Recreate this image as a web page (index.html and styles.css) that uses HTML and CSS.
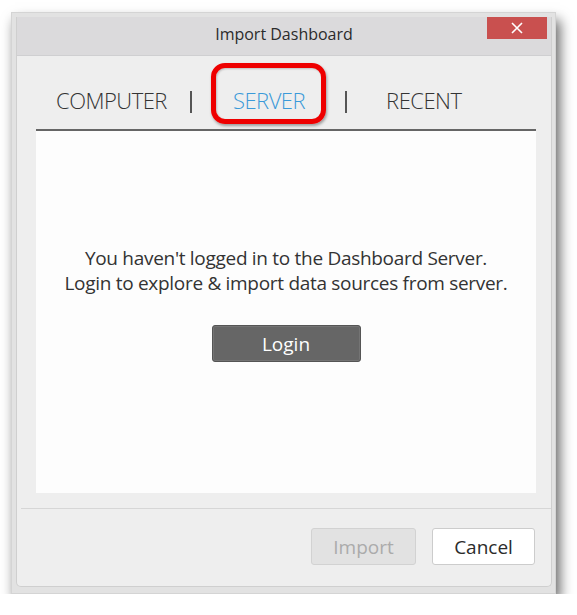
FILE: index.html
```html
<!DOCTYPE html>
<html>
<head>
<meta charset="utf-8">
<link rel="stylesheet" href="styles.css">
</head>
<body>
<div class="frame">
  <div class="dialog">
    <div class="titlebar">
      <span class="title">Import Dashboard</span>
      <button class="close" aria-label="Close">
        <svg width="12" height="12" viewBox="0 0 12 12"><path d="M1 1L11 11M11 1L1 11" stroke="#fff" stroke-width="1.6" fill="none"/></svg>
      </button>
    </div>
    <div class="body">
      <div class="tabs">
        <span class="tab">COMPUTER</span>
        <span class="sep sep1" aria-hidden="true"></span>
        <span class="tab active">SERVER</span>
        <span class="sep sep2" aria-hidden="true"></span>
        <span class="tab">RECENT</span>
      </div>
      <div class="panel">
        <p class="msg">You haven't logged in to the Dashboard Server.<br>Login to explore &amp; import data sources from server.</p>
        <button class="login">Login</button>
      </div>
    </div>
    <div class="footer">
      <button class="btn disabled">Import</button>
      <button class="btn cancel">Cancel</button>
    </div>
  </div>
</div>
</body>
</html>
```
FILE: styles.css
```css
html, body {
  margin: 0;
  padding: 0;
  background: #ffffff;
  font-family: "Open Sans", "Noto Sans", sans-serif;
}
body {
  padding: 12px 0 0 11px;
}
.frame {
  width: 545px;
  height: 582px;
  box-sizing: border-box;
  padding: 5px 4px 7px 5px;
  background: #e2e2e2;
  border: 1px solid #d4d4d4;
  box-shadow: 4px 8px 12px rgba(0,0,0,0.6);
}
.dialog {
  width: 536px;
  height: 570px;
  margin: -1px 0 0 -1px;
  background: #eeeeee;
  border-radius: 0 0 5px 5px;
  border: 1px solid #cfcfcf;
  border-top: none;
  box-sizing: border-box;
  display: flex;
  flex-direction: column;
  position: relative;
}
.titlebar {
  height: 39px;
  background: #dbdadc;
  border-bottom: 1px solid #cfcfd1;
  display: flex;
  align-items: center;
  justify-content: center;
  flex: none;
  box-sizing: border-box;
  padding-bottom: 5px;
}
.title {
  font-size: 16px;
  color: #2b2b2b;
}
.close {
  position: absolute;
  top: 0;
  right: 4px;
  width: 60px;
  height: 22px;
  border: none;
  background: #c9504f;
  padding: 0;
  display: flex;
  align-items: center;
  justify-content: center;
}
.body {
  padding: 0 15px 0 19px;
  flex: none;
}
.tabs {
  display: flex;
  align-items: center;
  border-bottom: 2px solid #666666;
  box-sizing: border-box;
  padding: 15px 0 0 20px;
  height: 75px;
}
.tab {
  font-size: 22px;
  font-weight: 300;
  color: #333333;
  letter-spacing: -0.5px;
}
.tab.active {
  color: #3a9ad9;
  position: relative;
}
.tab.active::after {
  content: "";
  position: absolute;
  left: -22px;
  right: -21px;
  top: -22px;
  bottom: -9px;
  border: 5px solid #ee0000;
  border-radius: 14px;
  box-shadow: 1px 2px 3px rgba(0,0,0,0.35), inset 1px 1px 2px rgba(0,0,0,0.2);
}
.sep {
  width: 2px;
  height: 22px;
  background: #555555;
  margin-top: 4px;
  flex: none;
}
.sep1 {
  margin-left: 23px;
  margin-right: 41px;
}
.sep2 {
  margin-left: 40px;
  margin-right: 39px;
}
.panel {
  height: 362px;
  background: #fdfdfd;
  display: flex;
  flex-direction: column;
  align-items: center;
  box-sizing: border-box;
  padding-top: 115px;
}
.msg {
  margin: 0;
  font-size: 19px;
  line-height: 25px;
  color: #333333;
  text-align: center;
  letter-spacing: -0.3px;
}
.login {
  margin-top: 29px;
  width: 149px;
  height: 37px;
  background: #666666;
  border: 1px solid #555555;
  border-radius: 3px;
  color: #ffffff;
  font-family: inherit;
  font-size: 19px;
  padding: 0;
  box-shadow: inset 0 0 0 1px #747474;
}
.footer {
  margin: 15px 0 0 4px;
  border-top: 1px solid #d6d6d6;
  display: flex;
  justify-content: flex-end;
  gap: 16px;
  padding: 19px 16px 0 0;
}
.btn {
  height: 37px;
  border-radius: 3px;
  font-family: inherit;
  font-size: 19px;
  padding: 0;
}
.btn.disabled {
  width: 105px;
  background: #e2e2e2;
  border: 1px solid #d2d2d2;
  color: #ababab;
}
.btn.cancel {
  width: 103px;
  background: #ffffff;
  border: 1px solid #cccccc;
  color: #2b2b2b;
}
```
